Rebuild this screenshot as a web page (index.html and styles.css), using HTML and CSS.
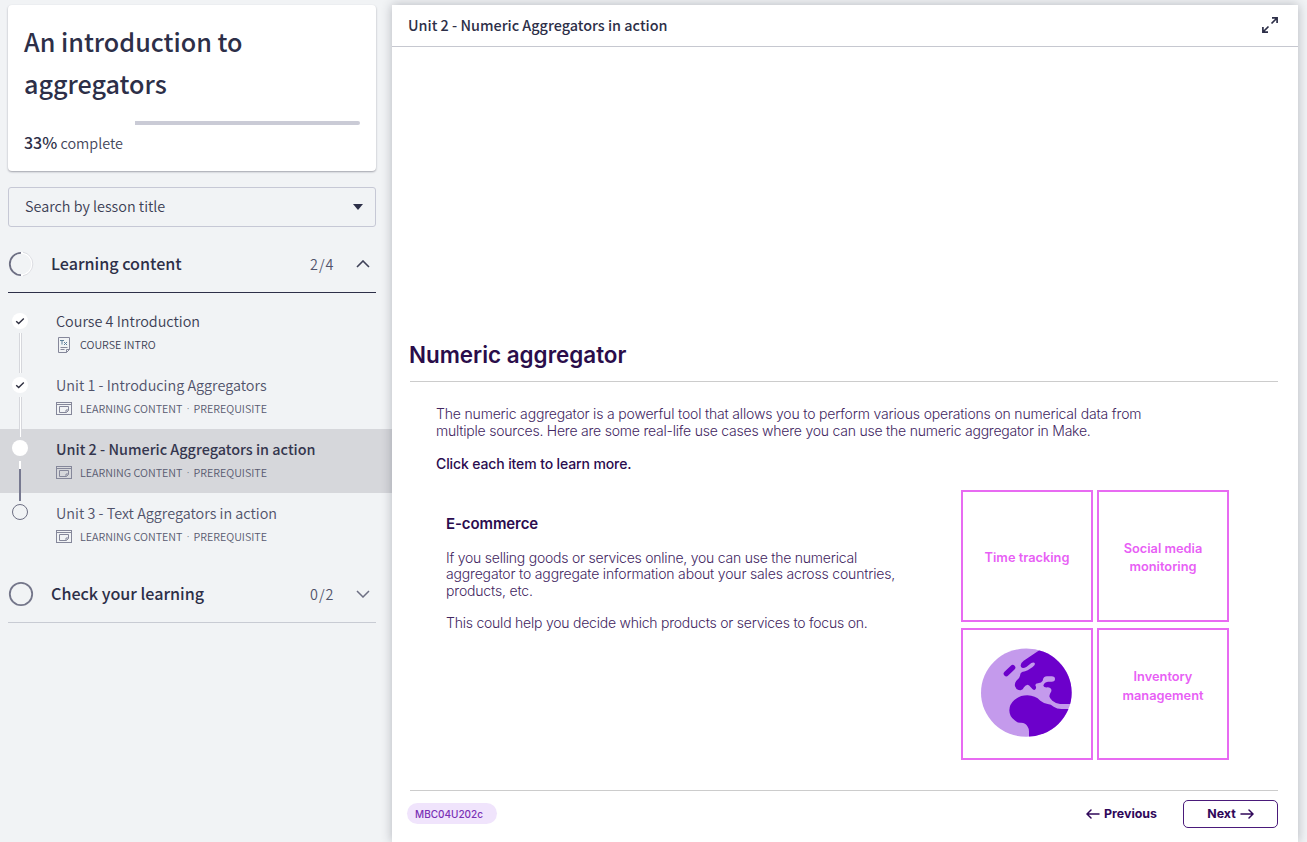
FILE: index.html
```html
<!DOCTYPE html>
<html lang="en">
<head>
<meta charset="utf-8">
<title>An introduction to aggregators</title>
<link rel="stylesheet" href="styles.css">
</head>
<body>
<svg class="defs" width="0" height="0">
  <symbol id="lesson" viewBox="0 0 16 14"><g fill="none" stroke="#85879a"><rect x=".5" y=".5" width="15" height="12"/><path d="M1 2.500h14M3.500 4.500h9v4l-2 2h-7zM12.500 8h-2.500v2.500" /></g></symbol>
  <symbol id="tick" viewBox="0 0 16 16"><path d="M4.200 8.200l2.500 2.400 5.100-5" fill="none" stroke="#2d2e3f" stroke-width="1.400"/></symbol>
</svg>
<div class="app">
  <aside class="sidebar">
    <section class="course">
      <h1 class="course-title"><span>An introduction to</span><br><span>aggregators</span></h1>
      <div class="bar"><div class="bar-rest"></div></div>
      <p class="complete"><b>33%</b> complete</p>
    </section>
    <div class="search"><span>Search by lesson title</span><svg width="10" height="6"><path d="M0 0h10l-5 6z" fill="#2d2f48"/></svg></div>
    <div class="section open">
      <svg class="ring" width="26" height="26"><circle cx="13" cy="13" r="11.200" fill="none" stroke="#fff" stroke-width="1.800"/><path d="M15 1.200a12 12 0 0 1 0 23.600" fill="none" stroke="#d3d4da" stroke-width=".8"/><path d="M13 1.800a11.200 11.200 0 0 0 0 22.400" fill="none" stroke="#6d6f83" stroke-width="1.800"/></svg>
      <h2 class="section-name">Learning content</h2><span class="count">2/4</span>
      <svg class="chev" width="14" height="8"><path d="M1 7l6-6 6 6" fill="none" stroke="#3f4158" stroke-width="1.600"/></svg>
    </div>
    <div class="lessons">
      <div class="lesson">
        <div class="track"><div class="dot"><svg width="16" height="16"><use href="#tick"/></svg></div><div class="rail"></div></div>
        <div class="info"><div class="lesson-name dark">Course 4 Introduction</div>
        <div class="meta dark"><svg class="meta-icon" width="16" height="16"><g fill="none" stroke="#85879a"><path d="M2.500.500h11v12l-3 3h-8zM13.500 12.500h-3v3M4.500 10.500h7M4.500 12.500h4"/><path d="M4 3.500h4M6 3.500v4M8 5l3 3M11 5l-3 3" stroke="#5d7f9a"/></g></svg><span>COURSE INTRO</span></div></div>
      </div>
      <div class="lesson">
        <div class="track"><div class="dot"><svg width="16" height="16"><use href="#tick"/></svg></div><div class="rail"></div></div>
        <div class="info"><div class="lesson-name">Unit 1 - Introducing Aggregators</div>
        <div class="meta"><svg class="meta-icon" width="16" height="14"><use href="#lesson"/></svg><span>LEARNING CONTENT</span><i class="sep">·</i><span>PREREQUISITE</span></div></div>
      </div>
      <div class="lesson active">
        <div class="track up"><div class="dot"></div><div class="rail half"></div></div>
        <div class="info"><div class="lesson-name bold">Unit 2 - Numeric Aggregators in action</div>
        <div class="meta"><svg class="meta-icon" width="16" height="14"><use href="#lesson"/></svg><span>LEARNING CONTENT</span><i class="sep">·</i><span>PREREQUISITE</span></div></div>
      </div>
      <div class="lesson">
        <div class="track up"><div class="dot empty"></div></div>
        <div class="info"><div class="lesson-name">Unit 3 - Text Aggregators in action</div>
        <div class="meta"><svg class="meta-icon" width="16" height="14"><use href="#lesson"/></svg><span>LEARNING CONTENT</span><i class="sep">·</i><span>PREREQUISITE</span></div></div>
      </div>
    </div>
    <div class="section">
      <svg class="ring" width="26" height="26"><circle cx="13" cy="13" r="11.200" fill="none" stroke="#74768a" stroke-width="1.800"/></svg>
      <h2 class="section-name">Check your learning</h2><span class="count">0/2</span>
      <svg class="chev" width="14" height="8"><path d="M1 1l6 6 6-6" fill="none" stroke="#6d6f83" stroke-width="1.500"/></svg>
    </div>
  </aside>
  <main class="player">
    <header class="topbar"><span class="unit-title">Unit 2 - Numeric Aggregators in action</span>
      <svg width="16" height="16"><g fill="none" stroke="#2d2f48" stroke-width="1.700"><path d="M9.500 6.500L15 1M10 .9h5.100V6M6.500 9.500L1 15M.9 10v5.100H6"/></g></svg>
    </header>
    <article class="slide">
      <h2 class="slide-title"><span>Numeric aggregator</span></h2>
      <div class="intro">
        <p><span>The numeric aggregator is a powerful tool that allows you to perform various operations on numerical data from</span><br><span class="line-two">multiple sources. Here are some real-life use cases where you can use the numeric aggregator in Make.</span></p>
        <p class="click">Click each item to learn more.</p>
      </div>
      <div class="content">
        <div class="copy">
          <h3 class="copy-title">E-commerce</h3>
          <p class="copy-text"><span class="tight">If you selling goods or services online, you can use the numerical</span><br>aggregator to aggregate information about your sales across countries,<br>products, etc.</p>
          <p class="copy-text tight">This could help you decide which products or services to focus on.</p>
        </div>
        <div class="tiles">
          <div class="tile"><span>Time tracking</span></div>
          <div class="tile"><span>Social media<br>monitoring</span></div>
          <div class="tile globe"><svg width="120" height="120" viewBox="0 0 360 360">
            <clipPath id="disc"><ellipse cx="184" cy="173" rx="136" ry="132.500"/></clipPath>
            <g clip-path="url(#disc)"><path d="M40 30h290v290H40z" fill="#c49aec"/>
            <path fill="#6c00cb" d="M224 45L176 77Q164 86 168 95Q172 103 184 96L199 84Q207 80 210 86Q210 90 203 96L188 106Q181 109 171 111Q165 114 165 122Q164 130 154 137Q148 144 150 154Q155 167 167 166Q174 164 177 157Q182 149 188 149Q193 150 196 155L203 163Q210 168 213 160Q214 157 211 151Q211 145 219 145Q230 143 233 137C234 128 239 124 246 124H260Q270 124 270 132Q270 140 260 140H249Q237 142 235 152Q237 158 247 157Q261 158 259 169Q254 177 253 184Q254 191 262 197Q273 206 285 207H345V30Z"/>
            <path fill="#6c00cb" d="M345 222H289Q276 222 266 215Q258 208 248 207Q238 206 226 197Q211 182 187 181Q164 181 148 195Q133 208 133 226Q133 245 149 256Q157 264 168 263Q182 263 188 275Q192 280 192 290V330H345Z"/></g>
            <path d="M124 116L143 98" stroke="#6c00cb" stroke-width="16" stroke-linecap="round"/></svg></div>
          <div class="tile inventory"><span>Inventory<br>management</span></div>
        </div>
      </div>
      <footer class="foot">
        <span class="code">MBC04U202c</span>
        <div class="nav"><span class="prev"><svg width="14" height="10"><path d="M13 5H1.500M5 1L1 5l4 4" fill="none" stroke="#30085a" stroke-width="1.500" stroke-linecap="round"/></svg><b>Previous</b></span>
        <span class="next"><b>Next</b><svg width="14" height="10"><path d="M1 5h11.500M9 1l4 4-4 4" fill="none" stroke="#30085a" stroke-width="1.500" stroke-linecap="round"/></svg></span></div>
      </footer>
    </article>
  </main>
</div>
</body>
</html>
```
FILE: styles.css
```css
* { box-sizing: border-box; margin: 0; padding: 0; }
body { width: 1307px; height: 842px; overflow: hidden; background: #f1f3f5; font-family: "Noto Sans CJK SC", "Noto Sans", sans-serif; color: #2d2f48; white-space: nowrap; }
svg { display: block; flex: none; }
.defs { position: absolute; }
.app { display: flex; height: 842px; }
.sidebar { width: 392px; padding-top: 5px; }
.course { width: 368px; height: 166px; margin-left: 8px; padding: 15px 16px 0; background: #fff; border-radius: 4px; box-shadow: 0 1px 2px rgba(40,42,60,.4); }
.course-title { font-size: 25.15px; font-weight: 500; line-height: 42px; }
.bar { height: 4px; margin-top: 17px; display: flex; justify-content: flex-end; }
.bar-rest { width: 225px; background: #cacbd6; border-radius: 0 2px 2px 0; }
.complete { margin-top: 5px; font-size: 14.4px; line-height: 24px; color: #44465a; font-weight: 350; }
.complete b { font-size: 16px; font-weight: 500; color: #2d2f48; }
.search { display: flex; align-items: center; justify-content: space-between; width: 368px; height: 40px; margin: 16px 0 0 8px; padding: 0 12px 0 16px; border: 1px solid #c6c8d5; border-radius: 3px; font-size: 14.4px; line-height: 24px; font-weight: 350; color: #3c3e54; }
.search span { margin-top: -2px; }
.section { display: flex; align-items: center; width: 368px; height: 58px; margin-left: 8px; border-bottom: 1px solid #c8cbd3; }
.section.open { margin-top: 8px; border-color: #2d2f48; }
.section-name { margin: -2px 0 0 17px; font-size: 16.13px; font-weight: 500; line-height: 24px; }
.count { margin-left: auto; width: 26px; font-size: 14.4px; font-weight: 350; letter-spacing: 1px; color: #50526a; line-height: 24px; }
.chev { margin: 0 6px 0 20px; }
.lessons { padding-top: 8px; height: 272px; }
.lesson { display: flex; height: 64px; }
.lesson.active { background: #d6d7db; }
.track { width: 16px; margin-left: 12px; padding-top: 12px; }
.track.up { padding-top: 11px; }
.dot { width: 16px; height: 16px; border-radius: 50%; background: #fff; }
.dot.empty { background: none; border: 1px solid #6d6f83; }
.rail { width: 3px; height: 40px; margin: 4px 0 0 7px; background: #fff; border: solid #d6d7dc; border-width: 0 1px; }
.rail.half { position: relative; z-index: 1; border: 0; width: 2px; height: 40px; margin-top: 5px; background: linear-gradient(#fff 8px, #777990 8px); }
.info { margin-left: 28px; padding-top: 8px; }
.lesson-name { font-size: 14.4px; line-height: 24px; font-weight: 350; color: #50526a; }
.lesson-name.bold { font-weight: 500; color: #34364e; }
.lesson-name.dark, .meta.dark { color: #3c3e54; }
.meta { display: flex; align-items: center; height: 22px; font-size: 10.75px; line-height: 20px; font-weight: 350; color: #585a70; }
.meta span { margin-top: 2px; }
.meta-icon { margin: 1px 8px 0 0; }
.sep { width: 11px; text-align: center; font-style: normal; font-family: "Noto Sans", sans-serif; }
.player { width: 906px; margin-top: 5px; background: #fff; box-shadow: 0 0 10px rgba(40,42,60,.3); }
.topbar { height: 42px; padding: 0 20px 0 16px; display: flex; align-items: center; justify-content: space-between; border-bottom: 1px solid #c6c8d0; font-size: 14.4px; line-height: 24px; font-weight: 500; }
.topbar svg { margin-top: -1px; }
.unit-title { margin-top: -2px; }
.slide { height: 795px; padding: 290px 20px 0 18px; font-family: Inter, sans-serif; color: #2b0c4f; }
.slide-title { height: 45px; border-bottom: 1px solid #ccc; font-size: 22.4px; line-height: 36px; font-weight: 600; color: #2a0d4a; }
.slide-title span { margin-left: -1px; }
.intro { padding: 23px 0 0 26px; height: 108px; font-size: 14px; line-height: 17px; font-weight: 300; letter-spacing: -.175px; color: #42265f; }
.line-two { letter-spacing: -.22px; }
.click { margin-top: 16px; font-weight: 500; letter-spacing: -.12px; color: #2b0c4f; }
.content { display: flex; justify-content: space-between; padding: 0 49px 0 36px; height: 300px; }
.copy { padding-top: 24px; }
.copy-title { font-size: 15px; line-height: 20px; font-weight: 600; letter-spacing: -.1px; }
.copy-text { margin-top: 16px; font-size: 14px; line-height: 16.4px; font-weight: 300; letter-spacing: -.17px; color: #42265f; }
.tight { letter-spacing: -.23px; }
.tiles { display: grid; grid-template-columns: 132px 132px; grid-auto-rows: 132px; gap: 6px 4px; }
.tile { display: flex; align-items: center; justify-content: center; padding-top: 3px; border: 2px solid #e86bf2; text-align: center; color: #e85ff5; font-size: 12.8px; line-height: 18px; font-weight: 600; }
.tile.globe { padding-top: 0; }
.globe svg { margin: 2px 4px 0 0; }
.tile.inventory { padding: 0 0 16px; line-height: 19px; }
.foot { border-top: 1px solid #ccc; display: flex; justify-content: space-between; padding-top: 9px; }
.code { width: 90px; height: 21px; margin: 3px 0 0 -3px; padding-left: 8px; border-radius: 11px; background: #f0e4fc; color: #7a30b5; font-size: 10px; line-height: 23px; font-weight: 500; }
.nav { display: flex; align-items: center; font-size: 12.4px; }
.nav b { margin-top: -1px; font-weight: 700; color: #30085a; }
.prev { display: flex; align-items: center; gap: 4px; margin-right: 26px; }
.next { display: flex; align-items: center; justify-content: center; gap: 4px; width: 95px; height: 28px; border: 1px solid #4a1a7a; border-radius: 5px; }
```
